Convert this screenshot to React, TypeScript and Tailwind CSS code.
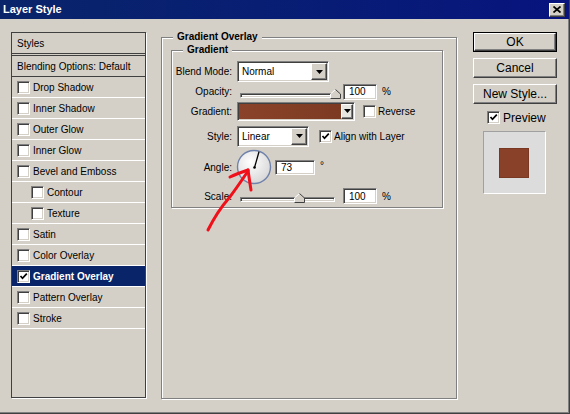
import React from 'react';

// ─ Classic 3D edges ────────────────────────────
const raised =
  'border border-t-white border-l-white border-r-[#404040] border-b-[#404040] shadow-[inset_-1px_-1px_0_#808080]';
const sunken =
  'border border-t-[#808080] border-l-[#808080] border-r-white border-b-white shadow-[inset_1px_1px_0_#404040,inset_-1px_-1px_0_#d4d0c8]';

const BROWN = '#8a4129';

function Check({ checked }: { checked?: boolean }) {
  return (
    <span className={`w-[13px] h-[13px] shrink-0 bg-white flex items-center justify-center ${sunken}`}>
      {checked && (
        <svg width="9" height="9" viewBox="0 0 9 9">
          <path d="M1.5 4 L3.5 6.3 L7.8 1.6" fill="none" stroke="#000" strokeWidth="1.7" />
        </svg>
      )}
    </span>
  );
}

function Triangle() {
  return (
    <svg width="7" height="4" viewBox="0 0 7 4">
      <path d="M0 0 H7 L3.5 4 Z" fill="#000" />
    </svg>
  );
}

function Select({ value, width }: { value: string; width: string }) {
  return (
    <div className={`${width} h-[21px] bg-white flex p-[1px] ${sunken}`}>
      <span className="flex-1 flex items-center pl-[3px]">{value}</span>
      <span className={`w-[16px] bg-[#d4d0c8] flex items-center justify-center ${raised}`}>
        <Triangle />
      </span>
    </div>
  );
}

function Field({ value, width, height = 'h-[16px]' }: { value: string; width: string; height?: string }) {
  return (
    <div className={`${width} ${height} bg-white flex items-center pl-[5px] ${sunken}`}>{value}</div>
  );
}

function Thumb() {
  return (
    <svg width="11" height="10" viewBox="0 0 11 10">
      <polygon points="5.5,0.5 10.5,5 10.5,9.5 0.5,9.5 0.5,5" fill="#d4d0c8" />
      <polyline points="0.5,9.5 0.5,5 5.5,0.5" fill="none" stroke="#fff" />
      <polyline points="5.5,0.5 10.5,5 10.5,9.5 0.5,9.5" fill="none" stroke="#404040" />
    </svg>
  );
}

function Slider({ pos }: { pos: number }) {
  return (
    <div className="relative w-[100px] h-[14px]">
      <div className={`absolute left-[3px] top-[8px] w-[95px] h-[5px] bg-white ${sunken}`} />
      <div className="absolute top-[4px]" style={{ left: pos }}>
        <Thumb />
      </div>
    </div>
  );
}

function Label({ children }: { children: React.ReactNode }) {
  return <span className="w-[60px] mr-[5px] text-right shrink-0">{children}</span>;
}

// ─ Left styles list ────────────────────────────
const effects = [
  { label: 'Drop Shadow', sub: false },
  { label: 'Inner Shadow', sub: false },
  { label: 'Outer Glow', sub: false },
  { label: 'Inner Glow', sub: false },
  { label: 'Bevel and Emboss', sub: false },
  { label: 'Contour', sub: true },
  { label: 'Texture', sub: true },
  { label: 'Satin', sub: false },
  { label: 'Color Overlay', sub: false },
  { label: 'Gradient Overlay', sub: false, active: true },
  { label: 'Pattern Overlay', sub: false },
  { label: 'Stroke', sub: false },
];

function StyleList() {
  return (
    <div className="ml-[11px] mt-[13px] w-[135px] h-[366px] border border-[#404040] shadow-[1px_1px_0_#fff] flex flex-col">
      <div className="h-[21px] border-b border-b-[#404040] flex items-center pl-[5px]">Styles</div>
      <div className="mt-[1px] h-[22px] border-y border-y-[#404040] flex items-center pl-[5px]">
        Blending Options: Default
      </div>
      {effects.map((e) => (
        <div
          key={e.label}
          className={`h-[21px] border-b border-b-white flex items-center gap-[3px] ${
            e.sub ? 'pl-[19px]' : 'pl-[5px]'
          } ${e.active ? 'bg-[#0a246a] text-white font-bold' : ''}`}
        >
          <Check checked={e.active} />
          <span>{e.label}</span>
        </div>
      ))}
    </div>
  );
}

// ─ Gradient overlay panel ──────────────────────
function AngleDial() {
  return (
    <svg width="36" height="36" viewBox="0 0 36 36" className="ml-[-1px]">
      <defs>
        <radialGradient id="dialFill" cx="40%" cy="35%" r="70%">
          <stop offset="0" stopColor="#ffffff" />
          <stop offset="1" stopColor="#d6d6d6" />
        </radialGradient>
      </defs>
      <circle cx="18" cy="18" r="16.5" fill="url(#dialFill)" stroke="#6f82ab" strokeWidth="1.4" />
      <line x1="18.5" y1="18.5" x2="23" y2="2.8" stroke="#000" strokeWidth="1.3" />
      <circle cx="18.5" cy="18.5" r="1.3" fill="#000" />
    </svg>
  );
}

function GradientPanel() {
  return (
    <div className="relative ml-[15px] mt-[18px] w-[296px] h-[362px] border border-[#808080] shadow-[1px_1px_0_#fff,inset_1px_1px_0_#fff]">
      <span className="absolute left-[11px] -top-[7px] px-[4px] bg-[#d4d0c8] font-bold leading-[12px]">
        Gradient Overlay
      </span>

      <div className="relative ml-[9px] mt-[12px] w-[272px] h-[158px] border border-[#808080] shadow-[1px_1px_0_#fff,inset_1px_1px_0_#fff] flex flex-col">
        <span className="absolute left-[11px] -top-[7px] px-[4px] bg-[#d4d0c8] font-bold leading-[12px]">
          Gradient
        </span>

        {/* Blend mode */}
        <div className="mt-[10px] h-[21px] flex items-center">
          <Label>Blend Mode:</Label>
          <Select value="Normal" width="w-[92px]" />
        </div>

        {/* Opacity */}
        <div className="h-[19px] flex items-center">
          <Label>Opacity:</Label>
          <Slider pos={93} />
          <span className="ml-[6px]">
            <Field value="100" width="w-[34px]" />
          </span>
          <span className="ml-[5px]">%</span>
        </div>

        {/* Gradient swatch */}
        <div className="h-[20px] flex items-center">
          <Label>Gradient:</Label>
          <div className={`w-[118px] h-[19px] flex p-[1px] bg-white ${sunken}`}>
            <span className="flex-1 bg-gradient-to-r from-[#8a432a] to-[#7d3a22]" />
            <span className={`w-[12px] bg-[#e8e6e0] flex items-center justify-center ${raised}`}>
              <Triangle />
            </span>
          </div>
          <span className="ml-[8px] flex items-center gap-[2px]">
            <Check />
            <span>Reverse</span>
          </span>
        </div>

        {/* Style */}
        <div className="mt-[4px] h-[22px] flex items-center">
          <Label>Style:</Label>
          <Select value="Linear" width="w-[72px]" />
          <span className="ml-[10px] flex items-center gap-[2px]">
            <Check checked />
            <span>Align with Layer</span>
          </span>
        </div>

        {/* Angle */}
        <div className="mt-[2px] h-[36px] flex items-center">
          <Label>Angle:</Label>
          <AngleDial />
          <span className="ml-[3px]">
            <Field value="73" width="w-[40px]" height="h-[15px]" />
          </span>
          <span className="ml-[5px] self-start mt-[12px] leading-[10px]">°</span>
        </div>

        {/* Scale */}
        <div className="mt-[2px] h-[18px] flex items-center">
          <Label>Scale:</Label>
          <Slider pos={57} />
          <span className="ml-[6px]">
            <Field value="100" width="w-[34px]" />
          </span>
          <span className="ml-[5px]">%</span>
        </div>
      </div>
    </div>
  );
}

// ─ Right button column ─────────────────────────
function Button({ label, primary }: { label: string; primary?: boolean }) {
  const inner = (
    <div className={`h-full flex items-center justify-center bg-[#d4d0c8] ${raised}`}>{label}</div>
  );
  return primary ? (
    <div className="h-[20px] border border-black">{inner}</div>
  ) : (
    <div className="h-[20px]">{inner}</div>
  );
}

function ActionColumn() {
  return (
    <div className="ml-[16px] mt-[13px] w-[84px] flex flex-col text-[12px]">
      <Button label="OK" primary />
      <div className="mt-[6px]">
        <Button label="Cancel" />
      </div>
      <div className="mt-[6px]">
        <Button label="New Style..." />
      </div>
      <div className="mt-[7px] h-[13px] pl-[14px] flex items-center gap-[3px]">
        <Check checked />
        <span>Preview</span>
      </div>
      <div className="mt-[7px] ml-[10px] w-[63px] h-[63px] bg-[#dcdcdc] border border-t-[#a0a0a0] border-l-[#a0a0a0] border-r-white border-b-white">
        <div
          className="ml-[15px] mt-[16px] w-[30px] h-[30px] shadow-[inset_0_0_0_1px_rgba(90,40,20,0.35)]"
          style={{ backgroundColor: BROWN }}
        />
      </div>
    </div>
  );
}

// ─ Hand-drawn annotation ───────────────────────
function RedArrow() {
  return (
    <svg
      className="absolute left-0 top-0 pointer-events-none"
      width="570"
      height="414"
      viewBox="0 0 570 414"
    >
      <g fill="none" stroke="#f0101a" strokeWidth="3" strokeLinecap="round" strokeLinejoin="round">
        <path d="M208 230 C 214 218 222 206 229 198 C 236 189 242 180 248 171" />
        <path d="M230 177 C 236 174 242 172 248 170" />
        <path d="M248 170 C 249 177 250 184 251 190" />
      </g>
    </svg>
  );
}

export default function App() {
  return (
    <div className="relative w-[570px] h-[414px] overflow-hidden bg-[#d4d0c8] border-r border-b border-[#404040] shadow-[inset_-1px_-1px_0_#808080] flex flex-col font-['Liberation_Sans',Arial,sans-serif] text-[10px] text-black">
      {/* Title bar */}
      <div className="h-[19px] shrink-0 bg-gradient-to-r from-[#0a246a] to-[#08137e] flex items-center justify-between">
        <span className="pl-[3px] text-white font-bold text-[11px]">Layer Style</span>
        <span className={`mr-[4px] w-[16px] h-[14px] bg-[#d4d0c8] flex items-center justify-center ${raised}`}>
          <svg width="8" height="7" viewBox="0 0 8 7">
            <path d="M0.5 0.5 L7.5 6.5 M7.5 0.5 L0.5 6.5" stroke="#000" strokeWidth="1.7" />
          </svg>
        </span>
      </div>

      <div className="flex items-start">
        <StyleList />
        <GradientPanel />
        <ActionColumn />
      </div>

      <RedArrow />
    </div>
  );
}
